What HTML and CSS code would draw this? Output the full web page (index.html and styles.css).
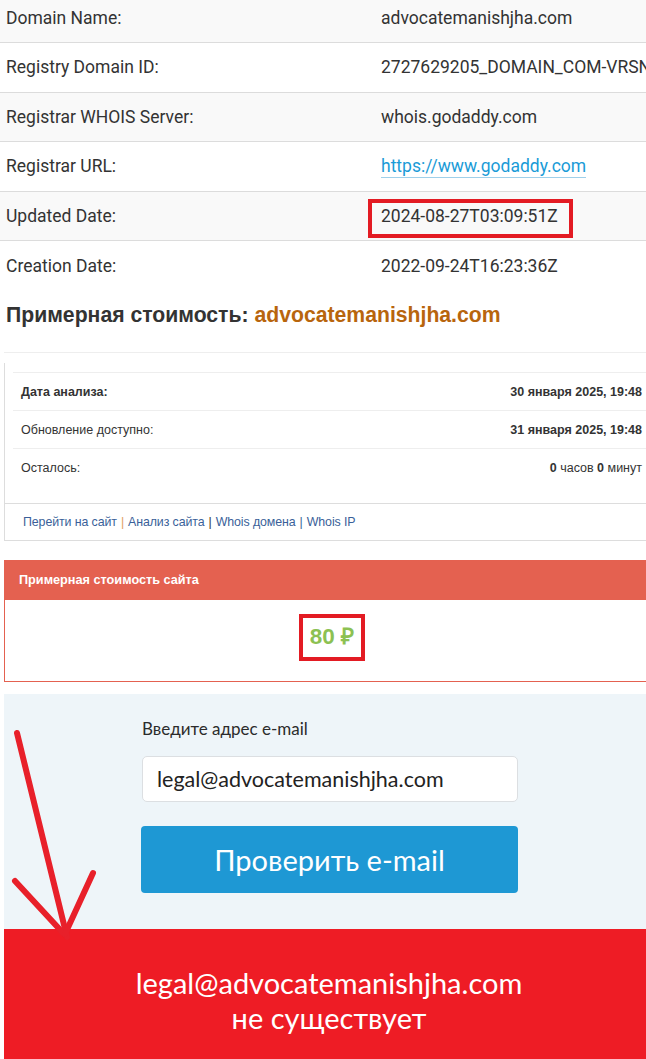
FILE: index.html
```html
<!DOCTYPE html>
<html lang="ru">
<head>
<meta charset="utf-8">
<title>Whois</title>
<link rel="stylesheet" href="styles.css">
</head>
<body>
<div class="page">
  <table class="whois">
    <tr class="odd"><td class="k">Domain Name:</td><td class="v">advocatemanishjha.com</td></tr>
    <tr><td class="k">Registry Domain ID:</td><td class="v">2727629205_DOMAIN_COM-VRSN</td></tr>
    <tr class="odd"><td class="k">Registrar WHOIS Server:</td><td class="v">whois.godaddy.com</td></tr>
    <tr><td class="k">Registrar URL:</td><td class="v"><a class="link" href="#">https://www.godaddy.com</a></td></tr>
    <tr class="odd"><td class="k">Updated Date:</td><td class="v v-mark"><span class="mark">2024-08-27T03:09:51Z</span></td></tr>
    <tr><td class="k">Creation Date:</td><td class="v">2022-09-24T16:23:36Z</td></tr>
  </table>

  <h2 class="title">Примерная стоимость: <span class="dom">advocatemanishjha.com</span></h2>

  <div class="analysis">
    <div class="panel">
      <div class="rows">
        <div class="row"><b>Дата анализа:</b><b>30 января 2025, 19:48</b></div>
        <div class="row"><span>Обновление доступно:</span><b>31 января 2025, 19:48</b></div>
        <div class="row"><span>Осталось:</span><span><b>0</b> часов <b>0</b> минут</span></div>
      </div>
      <div class="links">
        <a href="#">Перейти на сайт</a> <span class="sep1">|</span> <a href="#">Анализ сайта</a> <span class="sep">|</span> <a href="#">Whois домена</a> <span class="sep2">|</span> <a href="#">Whois IP</a>
      </div>
    </div>
  </div>

  <div class="price">
    <div class="price-head">Примерная стоимость сайта</div>
    <div class="price-body"><span class="price-val">80 ₽</span></div>
  </div>

  <div class="check">
    <div class="form">
      <label class="lbl">Введите адрес e-mail</label>
      <div class="input">legal@advocatemanishjha.com</div>
      <div class="btn">Проверить e-mail</div>
    </div>
  </div>
  <div class="result">
    <div>legal@advocatemanishjha.com</div>
    <div>не существует</div>
  </div>

  <svg class="arrow" width="110" height="230" viewBox="0 0 110 230">
    <g stroke="#e8202a" stroke-width="6" stroke-linecap="round" fill="none">
      <path d="M17 33 L67 237"/>
      <path d="M15 181 L64 234"/>
      <path d="M93 173 L65 234"/>
    </g>
  </svg>
</div>
</body>
</html>
```

FILE: styles.css
```css
html, body {
  margin: 0;
  padding: 0;
  background: #fff;
}
.page {
  position: relative;
  width: 646px;
  height: 1059px;
  overflow: hidden;
}

/* whois table */
.whois {
  width: 660px;
  border-collapse: collapse;
  margin-top: -7px;
  font-family: Roboto, "Liberation Sans", sans-serif;
  font-size: 17.5px;
  color: #333;
}
.whois tr {
  height: 49.5px;
  background: #fff;
}
.whois tr.odd { background: #f9f9f9; }
.whois td {
  border-bottom: 1px solid #dcdcdc;
  padding: 0;
  vertical-align: middle;
  white-space: nowrap;
}
.whois tr:last-child td { border-bottom: none; }
.whois td.k {
  width: 375px;
  padding-left: 6px;
}
.whois td.v-mark { padding-top: 6px; }
.link {
  color: #1a9bd7;
  text-decoration: none;
  border-bottom: 1px solid #9fd0ea;
  padding-bottom: 1px;
}
.mark {
  display: inline-block;
  margin-left: -13px;
  padding: 3px 11px 8px 9px;
  border: 4px solid #e31b23;
}

/* heading */
.title {
  margin: 13px 0 0 6px;
  height: 24px;
  font-family: "Liberation Sans", Arial, sans-serif;
  font-size: 21.2px;
  font-weight: bold;
  color: #333;
}
.dom { color: #b8650d; }

/* analysis */
.analysis {
  margin: 25px 0 0 4px;
  border-top: 1px solid #eee;
  padding-top: 10px;
}
.panel {
  border-left: 1px solid #ddd;
  border-bottom: 1px solid #ddd;
  padding-top: 9px;
  font-family: "Liberation Sans", Arial, sans-serif;
  font-size: 12.5px;
  color: #333;
}
.rows {
  margin-left: 8px;
  padding-bottom: 17px;
}
.row {
  display: flex;
  justify-content: space-between;
  align-items: center;
  height: 37px;
  border-top: 1px solid #eee;
  padding: 0 4px 0 8px;
}
.row b { font-weight: bold; }
.links {
  border-top: 1px solid #ddd;
  height: 36px;
  display: flex;
  align-items: center;
  gap: 4px;
  padding-left: 18px;
  font-size: 12.4px;
  letter-spacing: -0.1px;
}
.links a {
  color: #3a5f99;
  text-decoration: none;
}
.sep1 { color: #e0a060; }
.sep { color: #333; }
.sep2 { color: #3a5f99; }

/* price */
.price {
  margin: 19px 0 0 4px;
  font-family: "Liberation Sans", Arial, sans-serif;
}
.price-head {
  height: 40px;
  background: #e46150;
  color: #fff;
  font-size: 12.7px;
  font-weight: bold;
  display: flex;
  align-items: center;
  padding-left: 15px;
}
.price-body {
  height: 82px;
  border-left: 1px solid #e46150;
  border-bottom: 1px solid #e46150;
  display: flex;
  justify-content: center;
  align-items: flex-start;
  padding-top: 14px;
  box-sizing: border-box;
}
.price-val {
  display: inline-block;
  margin-left: 13px;
  border: 4px solid #e31b23;
  padding: 7px 7px 9px 7px;
  color: #8cc152;
  font-size: 22.5px;
  font-weight: bold;
  line-height: 23px;
}

/* email check */
.check {
  margin: 12px 0 0 4px;
  height: 235px;
  background: #eef5f9;
  box-sizing: border-box;
  padding-top: 25px;
}
.form {
  margin-left: 137px;
  width: 377px;
  font-family: Lato, "Open Sans", sans-serif;
}
.lbl {
  display: block;
  font-size: 17px;
  color: #2b2b2b;
  height: 20px;
  line-height: 20px;
  margin-left: 1px;
}
.input {
  margin-top: 17px;
  height: 46px;
  box-sizing: border-box;
  background: #fff;
  border: 1px solid #dcdfe2;
  border-radius: 5px;
  padding-left: 14px;
  font-size: 21.5px;
  color: #222;
  display: flex;
  align-items: center;
  margin-left: 1px;
}
.btn {
  margin-top: 24px;
  height: 67px;
  background: #1e98d4;
  border-radius: 4px;
  color: #fff;
  font-size: 29px;
  display: flex;
  align-items: center;
  justify-content: center;
}
.result {
  margin-left: 4px;
  height: 130px;
  background: #ee1c25;
  color: #fff;
  font-family: Lato, "Open Sans", sans-serif;
  font-size: 29px;
  line-height: 35px;
  text-align: center;
  box-sizing: border-box;
  padding-top: 36px;
  padding-left: 8px;
}

/* hand-drawn annotation arrow */
.arrow {
  position: absolute;
  left: 0;
  top: 700px;
  overflow: visible;
}
```
